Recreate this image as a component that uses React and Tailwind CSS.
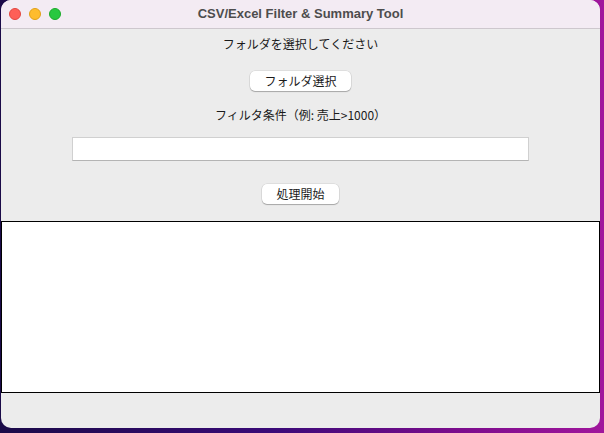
export default function App() {
    return (
        <div className="w-[604px] h-[433px] overflow-hidden bg-[linear-gradient(90deg,#1a0a48_0%,#3a0a78_45%,#7a0c8c_75%,#a0169c_100%)]">
            <div className="ml-[1px] w-[599px] h-[428px] flex flex-col bg-[#ececec] rounded-[10px] overflow-hidden font-['Noto_Sans_CJK_JP','Liberation_Sans',sans-serif] text-[12px] text-[#1a1a1a]">
                {/* Title bar */}
                <div className="relative h-[29px] shrink-0 flex items-center justify-center bg-[#f3ebf3] border-b border-[#cdc7cd]">
                    <div className="absolute left-[8px] top-[8px] flex gap-[8px]">
                        <span className="w-[12px] h-[12px] rounded-full bg-[#fe5f57] border border-[#e2463f]" />
                        <span className="w-[12px] h-[12px] rounded-full bg-[#febc2e] border border-[#e1a116]" />
                        <span className="w-[12px] h-[12px] rounded-full bg-[#28c840] border border-[#1aab29]" />
                    </div>
                    <span className="font-['Liberation_Sans',sans-serif] font-bold text-[13px] text-[#4d4d4d]">
                        CSV/Excel Filter &amp; Summary Tool
                    </span>
                </div>

                {/* Controls */}
                <div className="flex flex-col items-center">
                    <p className="mt-[7px] leading-[16px]">フォルダを選択してください</p>
                    <button className="mt-[19px] w-[101px] h-[20px] bg-white rounded-[5px] shadow-[0_0_0_0.5px_rgba(0,0,0,0.12),0_1px_1px_rgba(0,0,0,0.25)] leading-[20px]">
                        フォルダ選択
                    </button>
                    <p className="mt-[16px] leading-[16px]">フィルタ条件（例: 売上&gt;1000）</p>
                    <input
                        type="text"
                        className="mt-[14px] w-[457px] h-[24px] bg-white border border-[#d0d0d0] border-b-[#b4b4b4] outline-none"
                    />
                    <button className="mt-[23px] w-[77px] h-[20px] bg-white rounded-[5px] shadow-[0_0_0_0.5px_rgba(0,0,0,0.12),0_1px_1px_rgba(0,0,0,0.25)] leading-[20px]">
                        処理開始
                    </button>
                </div>

                {/* Output area */}
                <div className="mt-[17px] h-[172px] shrink-0 bg-white border border-black" />
            </div>
        </div>
    );
}
